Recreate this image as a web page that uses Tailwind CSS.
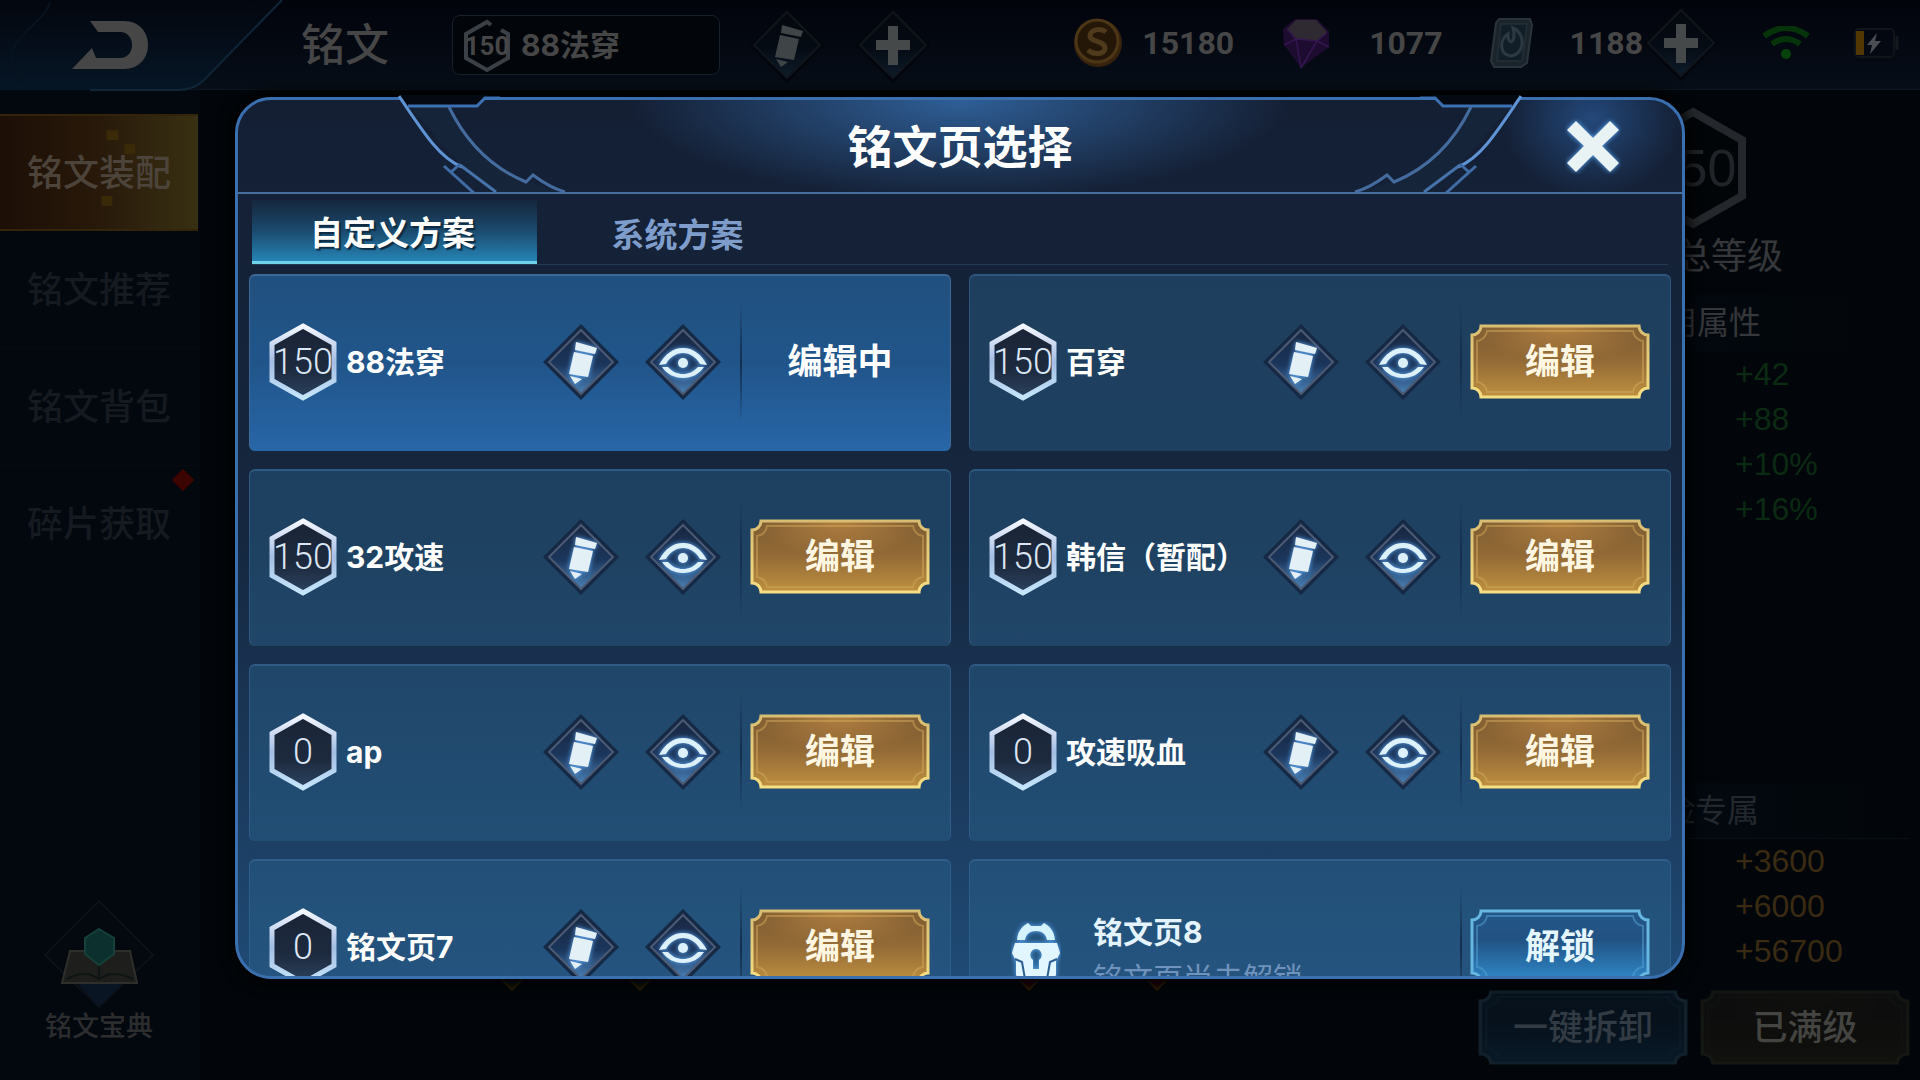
<!DOCTYPE html>
<html lang="zh-CN">
<head>
    <meta charset="UTF-8">
    <meta name="viewport" content="width=device-width, initial-scale=1.0">
    <title>铭文页选择</title>
    <script src="https://cdn.jsdelivr.net/npm/@tailwindcss/browser@4"></script>
</head>
<body class="bg-[#02060a] font-['Inter','Noto_Sans_CJK_SC',sans-serif]">

<!-- Shared icons -->
<svg class="absolute size-0" aria-hidden="true">
    <defs>
        <linearGradient id="hexStroke" x1="0" y1="0" x2="0" y2="1">
            <stop offset="0" stop-color="#f4f7ff"/><stop offset=".5" stop-color="#a3bde4"/><stop offset="1" stop-color="#c6e6fb"/>
        </linearGradient>
        <linearGradient id="hexFill" x1="0" y1="0" x2="0" y2="1">
            <stop offset="0" stop-color="#1a2436"/><stop offset=".6" stop-color="#1d2a3e"/><stop offset="1" stop-color="#2c4360"/>
        </linearGradient>
        <linearGradient id="diaFill" x1="0" y1="0" x2="0" y2="1">
            <stop offset="0" stop-color="#182741"/><stop offset=".55" stop-color="#1b365c"/><stop offset="1" stop-color="#4a82b8"/>
        </linearGradient>
        <linearGradient id="dimFill" x1="0" y1="0" x2="0" y2="1">
            <stop offset="0" stop-color="#04070d"/><stop offset=".55" stop-color="#050b14"/><stop offset="1" stop-color="#0d1c2a"/>
        </linearGradient>
        <linearGradient id="goldFill" x1="0" y1="0" x2="0" y2="1">
            <stop offset="0" stop-color="#7b5a31"/><stop offset=".5" stop-color="#946b36"/><stop offset="1" stop-color="#bf9040"/>
        </linearGradient>
        <radialGradient id="goldShine" cx=".5" cy="0" r=".5">
            <stop offset="0" stop-color="#c98f48" stop-opacity=".7"/><stop offset="1" stop-color="#c98f48" stop-opacity="0"/>
        </radialGradient>
        <linearGradient id="goldStroke" x1="0" y1="0" x2="0" y2="1">
            <stop offset="0" stop-color="#d8bd72"/><stop offset="1" stop-color="#f6df83"/>
        </linearGradient>
        <linearGradient id="blueFill" x1="0" y1="0" x2="0" y2="1">
            <stop offset="0" stop-color="#235788"/><stop offset=".4" stop-color="#225283"/><stop offset="1" stop-color="#2f8acb"/>
        </linearGradient>
        <filter id="glow" x="-30%" y="-30%" width="160%" height="160%">
            <feGaussianBlur stdDeviation="2.5" result="b"/>
            <feFlood flood-color="#5fb0ff"/><feComposite in2="b" operator="in" result="g"/>
            <feMerge><feMergeNode in="g"/><feMergeNode in="SourceGraphic"/></feMerge>
        </filter>
    </defs>

    <symbol id="hex" viewBox="0 0 68 78">
        <path d="M34 3 65 20.500V57.500L34 75 3 57.500V20.500Z" fill="url(#hexFill)" stroke="url(#hexStroke)" stroke-width="5"/>
    </symbol>
    <symbol id="diamond" viewBox="0 0 76 76">
        <path d="M38 0 76 38 38 76 0 38Z" fill="#152844"/>
        <path d="M38 6 70 38 38 70 6 38Z" fill="url(#diaFill)" stroke="#4c5a73" stroke-width="2"/>
    </symbol>
    <symbol id="diamondDim" viewBox="0 0 76 76">
        <path d="M38 0 76 38 38 76 0 38Z" fill="#03060c"/>
        <path d="M38 5 71 38 38 71 5 38Z" fill="url(#dimFill)" stroke="#11161d" stroke-width="2"/>
    </symbol>
    <symbol id="pencilMark" viewBox="0 0 76 76">
        <path d="M33 18 54 24 52 30 32 26Z"/>
        <path d="M31 28 50 32 45 53 26 50Z"/>
        <path d="M27 52 39 55 32 60Z"/>
    </symbol>
    <symbol id="pencil" viewBox="0 0 76 76">
        <use href="#diamond"/>
        <g fill="#e3f1f6" filter="url(#glow)"><use href="#pencilMark"/></g>
    </symbol>
    <symbol id="pencilDim" viewBox="0 0 76 76">
        <use href="#diamondDim"/>
        <g fill="#3f4446"><use href="#pencilMark"/></g>
    </symbol>
    <symbol id="plusDim" viewBox="0 0 76 76">
        <use href="#diamondDim"/>
        <path d="M33 19H43V33H55V43H43V58H33V43H21V33H33Z" fill="#45494a"/>
    </symbol>
    <symbol id="eye" viewBox="0 0 76 76">
        <use href="#diamond"/>
        <g fill="#dcf1fa" filter="url(#glow)">
            <path d="M14 41C20 30 28 24 38 24S56 30 62 41L55 40C51 33 45 29 38 29S25 33 21 40Z"/>
            <path d="M17 43H23C28 48 32 50 38 50S48 48 53 43H59C54 50 47 54 38 54S22 50 17 43Z"/>
            <circle cx="38" cy="39" r="5"/>
        </g>
    </symbol>
    <symbol id="lock" viewBox="0 0 50 72">
        <g filter="url(#glow)">
            <path d="M6 19C7 9 12 5 17 2L20 5H30L33 2C38 5 43 9 44 19H36C35 13 31 10 25 10S15 13 14 19Z" fill="#d5f3ff"/>
            <path fill-rule="evenodd" d="M4 22H46L49 32 45 40V54L36 66 25 70 14 66 5 54V40L1 32ZM25 28A6 6 0 0 0 22 39V48H28V39A6 6 0 0 0 25 28Z" fill="#e2f6ff"/>
            <path d="M4 38 11 41 14 58M46 38 39 41 36 58" fill="none" stroke="#2b5f93" stroke-width="2"/>
        </g>
    </symbol>
    <symbol id="goldBtn" viewBox="0 0 180 75" preserveAspectRatio="none">
        <path d="M11 2H169A9 9 0 0 0 178 11V64A9 9 0 0 0 169 73H11A9 9 0 0 0 2 64V11A9 9 0 0 0 11 2Z" fill="url(#goldFill)"/>
        <path d="M11 2H169A9 9 0 0 0 178 11V64A9 9 0 0 0 169 73H11A9 9 0 0 0 2 64V11A9 9 0 0 0 11 2Z" fill="url(#goldShine)" stroke="url(#goldStroke)" stroke-width="3"/>
        <path d="M17 7H163A11 11 0 0 0 173 17V58A11 11 0 0 0 163 68H17A11 11 0 0 0 7 58V17A11 11 0 0 0 17 7Z" fill="none" stroke="#d3a95a" stroke-opacity=".5" stroke-width="2"/>
    </symbol>
    <symbol id="blueBtn" viewBox="0 0 180 75" preserveAspectRatio="none">
        <path d="M11 2H169A9 9 0 0 0 178 11V64A9 9 0 0 0 169 73H11A9 9 0 0 0 2 64V11A9 9 0 0 0 11 2Z" fill="url(#blueFill)" stroke="#67b7e2" stroke-width="3"/>
        <path d="M17 7H163A11 11 0 0 0 173 17V58A11 11 0 0 0 163 68H17A11 11 0 0 0 7 58V17A11 11 0 0 0 17 7Z" fill="none" stroke="#57a4d8" stroke-opacity=".5" stroke-width="2"/>
    </symbol>
</svg>

<div class="relative min-h-screen overflow-hidden flex flex-col">

    <!-- Top bar -->
    <header class="relative h-[90px] flex items-center bg-linear-to-b from-[#02040c] to-[#070e17] border-b border-[#0b1420] text-[#464646]">
        <svg class="absolute left-0 top-0 w-[290px] h-[92px]" viewBox="0 0 290 92" aria-hidden="true">
            <defs>
                <linearGradient id="backBg" x1="0" y1="0" x2="0" y2="1"><stop offset="0" stop-color="#03060e"/><stop offset="1" stop-color="#061626"/></linearGradient>
            </defs>
            <path d="M0 0H282L204 80Q194 90 178 90H0Z" fill="url(#backBg)"/>
            <path d="M282 0 204 80Q194 90 178 90H90" fill="none" stroke="#0f2638" stroke-width="2"/>
            <path d="M50 2C46 20 14 35 12 55S20 70 20 84" fill="none" stroke="#07131f" stroke-width="2"/>
        </svg>
        <button class="relative ml-[70px] w-20 h-14" aria-label="返回">
            <svg class="size-full" viewBox="0 0 80 56"><path d="M20 4H54C86 4 86 52 54 52H2L22 31 26 41H50C66 41 66 15 50 15H28Z" fill="#464647"/></svg>
        </button>
        <h1 class="ml-[151px] text-[44px] leading-none font-medium">铭文</h1>
        <div class="relative ml-[63px] w-[268px] h-[60px] flex items-center pl-[10px] border border-[#16202a] rounded-lg bg-[#02050a]">
            <span class="grid place-items-center w-12 h-[52px]">
                <svg class="col-start-1 row-start-1 w-12 h-[54px]" viewBox="0 0 48 54"><path d="M28 6 24 3 3 15V39L24 51 45 39V15L38 11" fill="none" stroke="#3b4046" stroke-width="4"/></svg>
                <span class="col-start-1 row-start-1 font-['Roboto'] font-bold text-[26px] leading-none">150</span>
            </span>
            <span class="ml-[10px] text-[30px] leading-none font-bold whitespace-nowrap">88法穿</span>
        </div>
        <button class="ml-[29px] size-[76px]" aria-label="重命名"><svg class="size-full"><use href="#pencilDim"/></svg></button>
        <button class="ml-[30px] size-[76px]" aria-label="新增"><svg class="size-full"><use href="#plusDim"/></svg></button>

        <div class="ml-auto flex items-center pr-5 pb-1 font-['Roboto'] font-bold text-[32px] leading-none">
            <svg class="size-[50px]" viewBox="0 0 50 50"><circle cx="25" cy="25" r="24" fill="#37230d"/><circle cx="24" cy="23" r="21" fill="#241708" stroke="#4d3616" stroke-width="3"/><path d="M33 14C27 9 17 12 17 18S32 23 32 30 20 37 15 32" fill="none" stroke="#4f3a1b" stroke-width="5"/></svg>
            <span class="ml-[19px]">15180</span>
            <svg class="ml-[47px] w-[50px] h-[52px]" viewBox="0 0 50 52"><path d="M2 12 14 2H36L48 14V30L20 51 3 28Z" fill="#1d0b30"/><path d="M6 12 15 3H35L46 15 36 24 15 22Z" fill="#2f2932"/><path d="M6 12 15 22 20 51M15 22 36 24 46 16M36 24 20 51M3 28 15 22M48 30 36 24" fill="none" stroke="#341750" stroke-width="1.5"/></svg>
            <span class="ml-[38px]">1077</span>
            <svg class="ml-[47px] w-[44px] h-[52px]" viewBox="0 0 44 52"><path d="M9 2H40L42 8 37 46 31 50H4L1 44 6 6Z" fill="#1b242b" stroke="#2a343b" stroke-width="2"/><path d="M11 7H37L32 44H7Z" fill="#121e27" stroke="#232f38" stroke-width="1.500"/><path d="M23 11C37 17 34 38 21 39 8 37 10 22 18 17 17 28 27 28 23 11Z" fill="none" stroke="#2c3942" stroke-width="3"/></svg>
            <span class="ml-[36px]">1188</span>
            <button class="size-[76px]" aria-label="充值"><svg class="size-full"><use href="#plusDim"/></svg></button>
            <svg class="ml-[43px] w-[48px] h-[34px]" viewBox="0 0 48 34"><path d="M2 10Q24-6 46 10M10 18Q24 8 38 18" fill="none" stroke="#06330a" stroke-width="6"/><circle cx="24" cy="28" r="5" fill="#07420c"/></svg>
            <svg class="ml-[44px] w-[46px] h-[32px]" viewBox="0 0 46 32"><rect x="1" y="2" width="39" height="28" rx="4" fill="none" stroke="#111419" stroke-width="2"/><path d="M43 9V23" stroke="#14171b" stroke-width="3"/><path d="M2 4H10V28H2Z" fill="#523703"/><path d="M23 6 13 18H18L16 27 27 14H21Z" fill="#4c4d53"/></svg>
        </div>
    </header>

    <main class="flex-1 flex justify-between">
        <!-- Side navigation -->
        <nav class="w-[199px] flex flex-col pt-6 border-r border-[#060b12] bg-[#03070e] text-[36px] leading-none font-medium text-[#151a20]">
            <a href="#" class="relative h-[117px] flex items-center justify-center bg-linear-to-r from-[#1d0f06] via-[#28190a] to-[#383012] border-y-2 border-[#33240c] text-[#4c443b]">
                <svg class="absolute inset-0 size-full" viewBox="0 0 199 113" aria-hidden="true"><path d="M107 14H119V24H107ZM125 28H136V38H125ZM102 80H113V90H102Z" fill="#3b2a08"/></svg>
                <span class="relative">铭文装配</span>
            </a>
            <a href="#" class="h-[117px] flex items-center justify-center">铭文推荐</a>
            <a href="#" class="h-[117px] flex items-center justify-center border-t border-[#070c12]">铭文背包</a>
            <a href="#" class="relative h-[117px] flex items-center justify-center border-t border-[#070c12]">碎片获取
                <span class="absolute right-[7px] top-[6px] size-4 rotate-45 bg-[#3c0502]"></span>
            </a>
            <a href="#" class="mt-auto mb-[40px] flex flex-col items-center text-[27px] text-[#2c2d2f]">
                <svg class="w-[112px] h-[110px]" viewBox="0 0 112 110" aria-hidden="true">
                    <path d="M56 2 110 56 56 108 2 56Z" fill="#04080f" stroke="#0b1118" stroke-width="2"/>
                    <path d="M32 82H82L56 108Z" fill="#091522"/>
                    <path d="M27 52H87L94 84H19Z" fill="#1e1f1c" stroke="#2e2f2b" stroke-width="2"/>
                    <path d="M24 80Q42 70 56 80 70 70 90 80M56 54V80" fill="none" stroke="#0d1414" stroke-width="2"/>
                    <path d="M56 30 71 39V55L56 66 42 55V39Z" fill="#0b302d" stroke="#164039" stroke-width="2"/>
                </svg>
                <span class="mt-1">铭文宝典</span>
            </a>
        </nav>

        <!-- Attribute summary -->
        <aside class="w-[450px] flex flex-col pr-[10px] pb-[15px] text-[#35373a]">
            <div class="flex flex-col items-center pt-[17px] pl-[6px]">
                <span class="grid place-items-center">
                    <svg class="col-start-1 row-start-1 w-[108px] h-[122px]" viewBox="0 0 108 122"><path d="M54 5 103 33V89L54 117 5 89V33Z" fill="#020508" stroke="#24272b" stroke-width="8"/></svg>
                    <span class="col-start-1 row-start-1 font-['Liberation_Sans'] text-[52px] leading-none text-[#202327]">150</span>
                </span>
                <span class="mt-[9px] text-[36px] leading-[36px]">铭文总等级</span>
            </div>
            <h2 class="mt-5 h-[58px] pl-[163px] flex items-center text-[32px] leading-none bg-linear-to-r from-[#040a12] to-[#02060a]">应用属性</h2>
            <ul class="pl-[265px] font-['Liberation_Sans'] text-[32px] leading-[45px] text-[#0b2a12]">
                <li>+42</li>
                <li>+88</li>
                <li>+10%</li>
                <li>+16%</li>
            </ul>
            <h2 class="mt-auto h-[56px] pl-[161px] flex items-center text-[32px] leading-none text-[#23282e] bg-linear-to-r from-[#040c15] to-[#02060a] border-b border-[#071019]">冒险专属</h2>
            <ul class="pl-[265px] font-['Liberation_Sans'] text-[32px] leading-[45px] text-[#3a2a12]">
                <li>+3600</li>
                <li>+6000</li>
                <li>+56700</li>
            </ul>
            <div class="mt-4 flex justify-end gap-3 text-[35px] leading-none font-medium">
                <button class="relative w-[210px] h-[75px] text-[#323b43]">
                    <svg class="absolute inset-0 size-full opacity-15"><use href="#blueBtn"/></svg><span class="relative">一键拆卸</span>
                </button>
                <button class="relative w-[210px] h-[75px] text-[#444441]">
                    <svg class="absolute inset-0 size-full opacity-8"><use href="#goldBtn"/></svg><span class="relative">已满级</span>
                </button>
            </div>
        </aside>
    </main>

    <!-- Rune sockets behind the dialog -->
    <div class="absolute inset-x-[500px] bottom-[94px] flex gap-[104px]" aria-hidden="true">
        <i class="size-6 rotate-45 border-2 border-[#2a1d05] bg-[#10120a]"></i>
        <i class="size-6 rotate-45 border-2 border-[#2a1d05] bg-[#10120a]"></i>
        <i class="ml-[261px] size-6 rotate-45 border-2 border-[#2a1d05] bg-[#220705]"></i>
        <i class="size-6 rotate-45 border-2 border-[#2a1d05] bg-[#220705]"></i>
    </div>

    <!-- Page picker dialog -->
    <section role="dialog" aria-labelledby="dialog-title" class="absolute inset-x-[235px] top-[97px] bottom-[101px] flex flex-col overflow-hidden rounded-[36px] border-3 border-[#3a6fb0] bg-linear-to-b from-[#141f34] via-[#15273f] via-50% to-[#1f4a75] shadow-[0_0_14px_4px_#000]">
        <div class="relative shrink-0 h-[94px] pt-[3px] flex items-center justify-center border-b-2 border-[#466f9f] bg-[radial-gradient(ellipse_330px_100px_at_50%_0,#2f5f97,transparent)]">
            <div class="absolute right-0 inset-y-0 w-[180px] bg-[radial-gradient(ellipse_90px_80px_at_50%_20%,#23487a,transparent)]"></div>
            <h2 id="dialog-title" class="text-[45px] leading-none font-bold text-white">铭文页选择</h2>
            <button class="absolute right-[61px] top-[18px] size-[56px]" aria-label="关闭">
                <svg class="size-full" viewBox="0 0 56 56"><path d="M11 3 28 20 45 3 54 12 37 28 54 45 45 54 28 37 11 54 2 45 19 28 2 12Z" fill="#e9f3f4" filter="url(#glow)"/></svg>
            </button>
        </div>

        <div role="tablist" class="shrink-0 h-[71px] mx-[14px] pt-[6px] flex border-b border-[#243a55] text-[33px] leading-none font-bold">
            <button role="tab" aria-selected="true" class="w-[285px] pt-[6px] pr-1 text-white border-b-3 border-[#6fd3ea] bg-linear-to-b from-[#15273d] via-[#1a4a6e] to-[#2584b5] text-shadow-[2px_2px_1px_#0d2a40]">自定义方案</button>
            <button role="tab" aria-selected="false" class="w-[285px] pt-[6px] pr-1 text-[#7f9dcb]">系统方案</button>
        </div>

        <div id="page-list" class="flex-1 min-h-0 mt-[9px] px-[11px] grid grid-cols-2 auto-rows-[177px] gap-[18px] overflow-hidden"></div>
    </section>

    <!-- Dialog corner ornaments -->
    <svg class="absolute left-[398px] top-[95px] w-[180px] h-[98px] pointer-events-none" viewBox="398 95 180 98" aria-hidden="true">
        <g id="corner">
            <path d="M398 94H488L478 105H408Z" fill="#040912"/>
            <path d="M410 107H449C465 140 490 168 526 181L560 192H495L458 162Z" fill="#17283e" fill-opacity=".6"/>
            <path d="M408 106H477L485 98H500" fill="none" stroke="#3b70b2" stroke-width="3"/>
            <path d="M399 96C425 135 440 158 462 167" fill="none" stroke="#5f93d4" stroke-width="3"/>
            <path d="M460 165 496 192" fill="none" stroke="#4673aa" stroke-width="3"/>
            <path d="M444 166 474 193M450 173 460 164" fill="none" stroke="#3f6ca5" stroke-width="3"/>
            <path d="M449 107C467 144 492 168 526 182L533 175C545 184 554 189 565 192" fill="none" stroke="#456c9f" stroke-width="3"/>
        </g>
    </svg>
    <svg class="absolute right-[398px] top-[95px] w-[180px] h-[98px] -scale-x-100 pointer-events-none" viewBox="398 95 180 98" aria-hidden="true">
        <use href="#corner"/>
    </svg>
</div>

<script>
    const pages = [
        { level: 150, name: '88法穿', state: 'active' },
        { level: 150, name: '百穿', state: 'edit' },
        { level: 150, name: '32攻速', state: 'edit' },
        { level: 150, name: '韩信（暂配）', state: 'edit' },
        { level: 0, name: 'ap', state: 'edit' },
        { level: 0, name: '攻速吸血', state: 'edit' },
        { level: 0, name: '铭文页7', state: 'edit' },
        { name: '铭文页8', state: 'locked' },
    ];

    const list = document.getElementById('page-list');

    pages.forEach(page => {
        const card = document.createElement('article');
        const tone = page.state === 'active'
            ? 'bg-linear-to-b from-[#20507f] via-[#21558a] to-[#2766a8] border-[#3d6a97]'
            : 'bg-[#2a618c]/45 border-[#3a6a96]/60';
        card.className = `flex items-center rounded-md border-t-2 border-x pl-[19px] pr-5 pb-1 ${tone}`;

        const info = page.state === 'locked' ? `
            <svg class="ml-[22px] mt-5 w-[50px] h-[72px]"><use href="#lock"/></svg>
            <div class="ml-8 mt-4 flex flex-col gap-4 text-[30px] leading-none">
                <span class="font-bold text-[#e4f3ff]">${page.name}</span>
                <span class="text-[#6f93bd]">铭文页尚未解锁</span>
            </div>
            <span class="ml-auto"></span>
        ` : `
            <span class="grid place-items-center shrink-0">
                <svg class="col-start-1 row-start-1 w-[68px] h-[78px]"><use href="#hex"/></svg>
                <span class="col-start-1 row-start-1 font-['Roboto'] font-light text-[36px] leading-none text-[#dbe6f5]">${page.level}</span>
            </span>
            <span class="ml-[9px] text-[30px] leading-none font-bold text-white whitespace-nowrap">${page.name}</span>
            <button class="ml-auto size-[76px]" aria-label="重命名"><svg class="size-full"><use href="#pencil"/></svg></button>
            <button class="ml-[26px] mr-[19px] size-[76px]" aria-label="查看"><svg class="size-full"><use href="#eye"/></svg></button>
        `;

        const divider = '<span class="w-[2px] h-[120px] mr-[8px] bg-linear-to-b from-transparent via-[#142d4c] to-transparent"></span>';

        let action = '<span class="w-[180px] text-center text-[35px] leading-none font-bold text-white">编辑中</span>';
        if (page.state === 'edit') {
            action = `
                <button class="relative w-[180px] h-[75px] text-[35px] leading-none font-bold text-[#fff6e2]">
                    <svg class="absolute inset-0 size-full"><use href="#goldBtn"/></svg><span class="relative">编辑</span>
                </button>`;
        } else if (page.state === 'locked') {
            action = `
                <button class="relative w-[180px] h-[75px] text-[35px] leading-none font-bold text-[#e4f6ff]">
                    <svg class="absolute inset-0 size-full"><use href="#blueBtn"/></svg><span class="relative">解锁</span>
                </button>`;
        }

        card.innerHTML = info + divider + action;
        list.appendChild(card);
    });
</script>
</body>
</html>
